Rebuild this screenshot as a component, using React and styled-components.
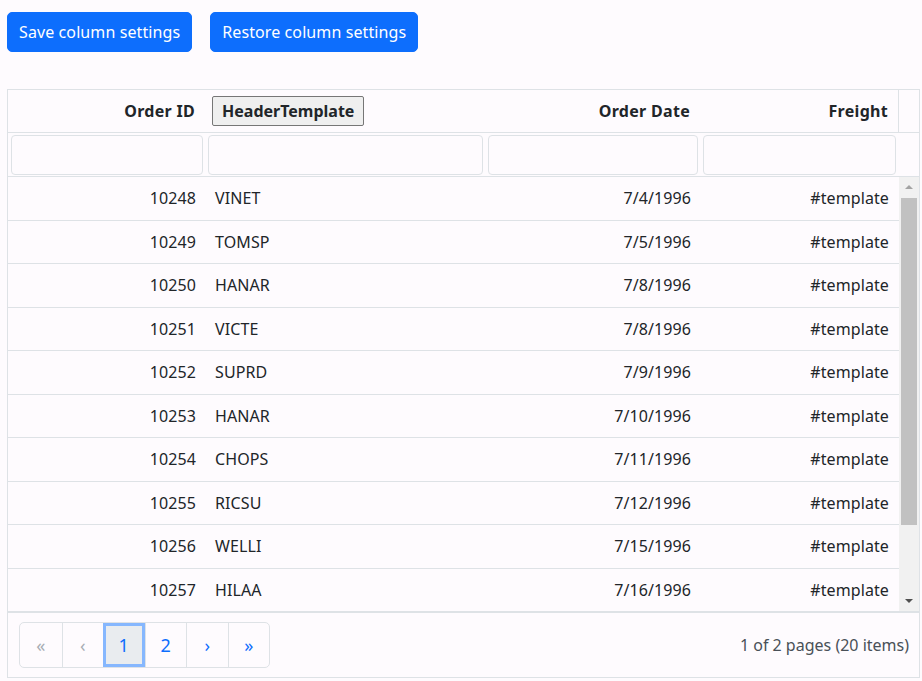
import React from 'react'
import styled, { createGlobalStyle } from 'styled-components'

const GlobalStyle = createGlobalStyle`
  body {
    margin: 0;
    background: #fefbfe;
    font-family: 'Noto Sans', 'Open Sans', sans-serif;
    color: #212529;
  }
`

const rows = [
  [10248, 'VINET', '7/4/1996'],
  [10249, 'TOMSP', '7/5/1996'],
  [10250, 'HANAR', '7/8/1996'],
  [10251, 'VICTE', '7/8/1996'],
  [10252, 'SUPRD', '7/9/1996'],
  [10253, 'HANAR', '7/10/1996'],
  [10254, 'CHOPS', '7/11/1996'],
  [10255, 'RICSU', '7/12/1996'],
  [10256, 'WELLI', '7/15/1996'],
  [10257, 'HILAA', '7/16/1996'],
]

const COLS = '197px 280px 215px 198px'

const App = () => {
  return (
    <Page>
      <GlobalStyle />
      <Toolbar>
        <Button>Save column settings</Button>
        <Button>Restore column settings</Button>
      </Toolbar>

      <Grid>
        <HeaderRow>
          <HeadCell align="right">Order ID</HeadCell>
          <HeadCell align="left"><TemplateBtn>HeaderTemplate</TemplateBtn></HeadCell>
          <HeadCell align="right">Order Date</HeadCell>
          <HeadCell align="right">Freight</HeadCell>
          <Spacer />
        </HeaderRow>
        <FilterRow>
          <FilterInput />
          <FilterInput />
          <FilterInput />
          <FilterInput />
          <Spacer />
        </FilterRow>

        <Body>
          <Rows>
            {rows.map(([id, name, date]) => (
              <Row key={id}>
                <Cell align="right">{id}</Cell>
                <Cell align="left">{name}</Cell>
                <Cell align="right">{date}</Cell>
                <Cell align="right">#template</Cell>
              </Row>
            ))}
          </Rows>
          <ScrollBar>
            <Arrow up />
            <Track><Thumb /></Track>
            <Arrow />
          </ScrollBar>
        </Body>

        <Pager>
          <PageList>
            <PageBtn disabled>«</PageBtn>
            <PageBtn disabled>‹</PageBtn>
            <PageBtn active>1</PageBtn>
            <PageBtn>2</PageBtn>
            <PageBtn>›</PageBtn>
            <PageBtn>»</PageBtn>
          </PageList>
          <PageInfo>1 of 2 pages (20 items)</PageInfo>
        </Pager>
      </Grid>
    </Page>
  )
}

const Page = styled.div`
  padding: 12px 2px 0 7px;
`

const Toolbar = styled.div`
  display: flex;
  gap: 18px;
  margin-bottom: 37px;
`

const Button = styled.button`
  height: 40px;
  padding: 0 11px;
  background: #0d6efd;
  border: 1px solid #0d6efd;
  border-radius: 5px;
  color: white;
  font-family: inherit;
  font-size: 16px;
  letter-spacing: 0.1px;
`

const Grid = styled.div`
  width: 913px;
  border: 1px solid #dee2e6;
  box-sizing: border-box;
`

const HeaderRow = styled.div`
  display: grid;
  grid-template-columns: ${COLS} 1fr;
  height: 43px;
  border-bottom: 1px solid #dee2e6;
  box-sizing: border-box;
`

const HeadCell = styled.div`
  display: flex;
  align-items: center;
  justify-content: ${p => (p.align === 'right' ? 'flex-end' : 'flex-start')};
  padding: 0 ${p => (p.align === 'right' ? '10px' : '7px')};
  font-weight: 700;
  font-size: 16px;
  letter-spacing: 0.3px;
`

const TemplateBtn = styled.button`
  height: 30px;
  padding: 0 9px;
  background: #efefef;
  border: 1px solid #767676;
  border-radius: 2px;
  font-family: inherit;
  font-weight: 700;
  font-size: 16px;
  color: #212529;
`

const Spacer = styled.div`
  border-left: 1px solid #dee2e6;
`

const FilterRow = styled.div`
  display: grid;
  grid-template-columns: ${COLS} 1fr;
  height: 44px;
  border-bottom: 1px solid #dee2e6;
  box-sizing: border-box;
  align-items: center;
`

const FilterInput = styled.input`
  height: 40px;
  margin: 0 2px 0 3px;
  box-sizing: border-box;
  border: 1px solid #dee2e6;
  border-radius: 4px;
  background: #fefbfe;
`

const Body = styled.div`
  display: flex;
  height: 436px;
  box-sizing: border-box;
  border-bottom: 2px solid #dee2e6;
  overflow: hidden;
`

const Rows = styled.div`
  flex: 1;
`

const Row = styled.div`
  display: grid;
  grid-template-columns: ${COLS};
  height: 43.5px;
  border-bottom: 1px solid #dee2e6;
  box-sizing: border-box;
  &:last-child {
    border-bottom: none;
  }
`

const Cell = styled.div`
  display: flex;
  align-items: center;
  justify-content: ${p => (p.align === 'right' ? 'flex-end' : 'flex-start')};
  padding: 0 ${p => (p.align === 'right' ? '9px' : '10px')};
  font-size: 16px;
  letter-spacing: 0.1px;
`

const ScrollBar = styled.div`
  width: 20px;
  display: flex;
  flex-direction: column;
  background: #f1f1f1;
`

const Arrow = styled.div`
  height: 21px;
  position: relative;
  &::after {
    content: '';
    position: absolute;
    left: 6px;
    top: ${p => (p.up ? '8px' : '9px')};
    border-left: 4px solid transparent;
    border-right: 4px solid transparent;
    ${p => (p.up ? 'border-bottom: 4px solid #a3a3a3;' : 'border-top: 4px solid #505050;')}
  }
`

const Track = styled.div`
  flex: 1;
  padding: 0 2px;
`

const Thumb = styled.div`
  height: 327px;
  background: #c1c1c1;
`

const Pager = styled.div`
  display: flex;
  align-items: center;
  justify-content: space-between;
  height: 64px;
  padding: 0 10px 0 11px;
`

const PageList = styled.div`
  display: flex;
  border: 1px solid #dee2e6;
  border-radius: 5px;
  height: 46px;
  box-sizing: border-box;
`

const PageBtn = styled.div`
  width: 41.5px;
  display: flex;
  align-items: center;
  justify-content: center;
  box-sizing: border-box;
  font-size: 18px;
  color: ${p => (p.disabled ? '#a7adb4' : '#0d6efd')};
  border-left: 1px solid #dee2e6;
  &:first-child {
    border-left: none;
  }
  ${p => p.active && `
    background: #e9ecef;
    border: 3px solid #86b7fe;
    color: #0d6efd;
  `}
`

const PageInfo = styled.div`
  font-size: 16px;
  color: #495057;
`

export default App
